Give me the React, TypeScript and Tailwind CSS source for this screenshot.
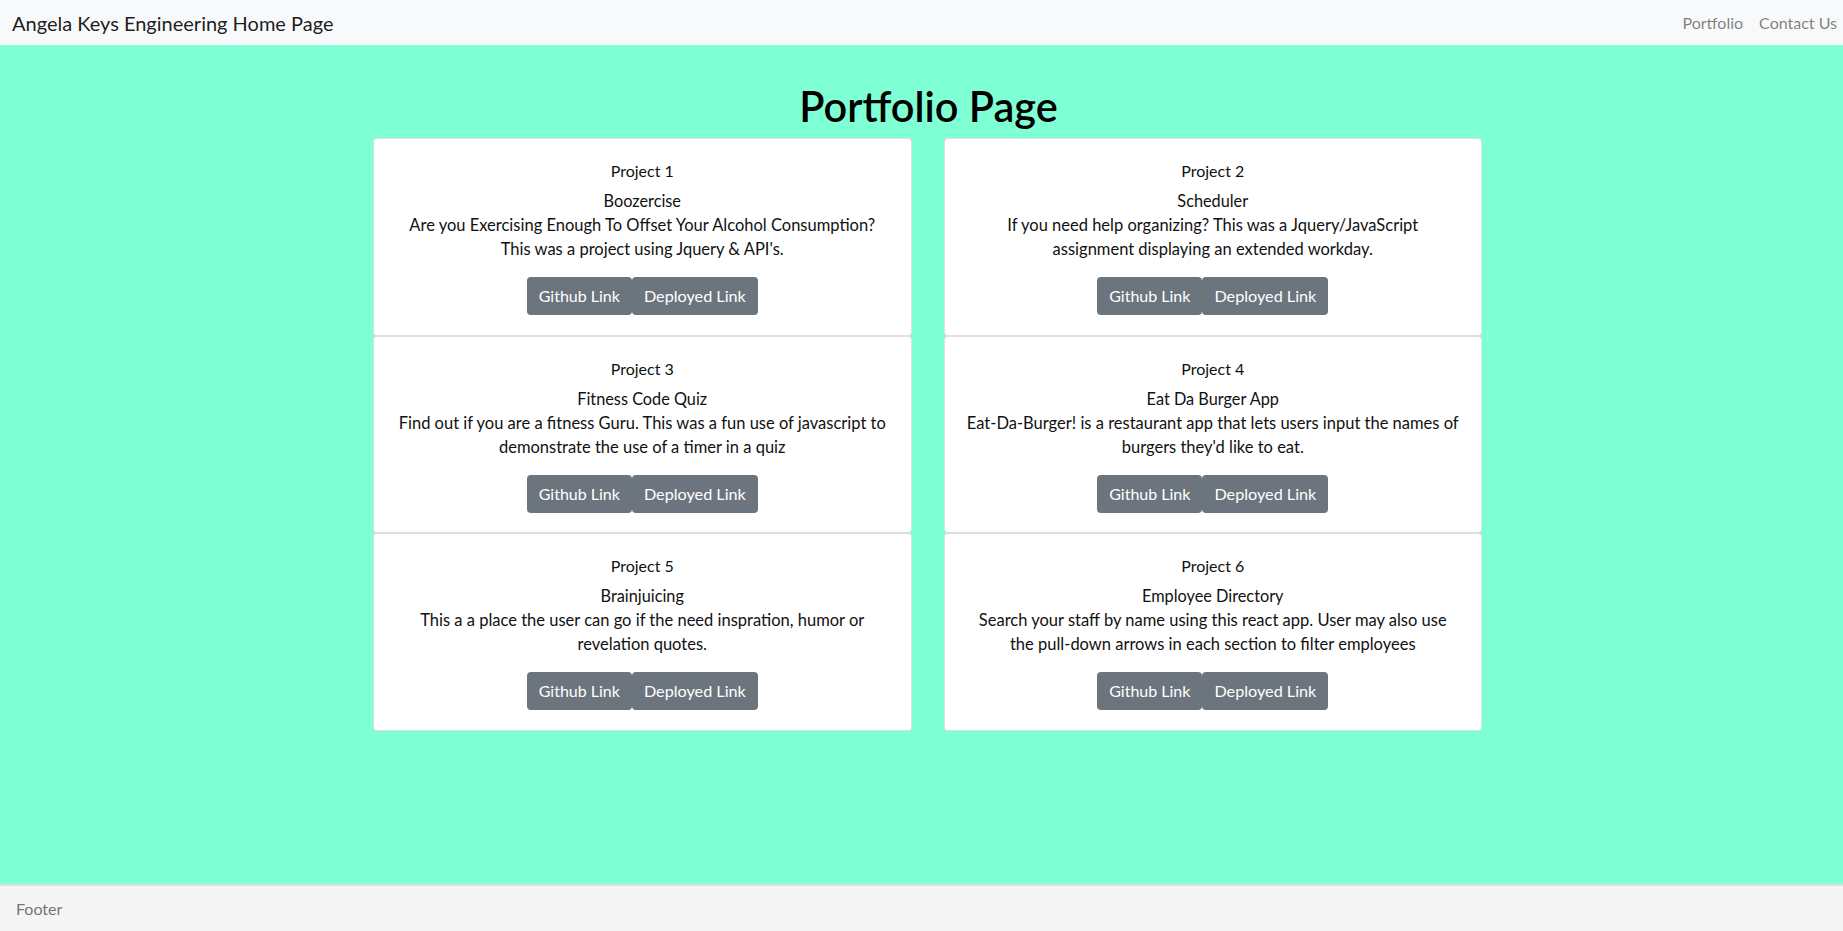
import React from "react";

const projects = [
  { n: "Project 1", t: "Boozercise", d: ["Are you Exercising Enough To Offset Your Alcohol Consumption?", "This was a project using Jquery & API's."] },
  { n: "Project 2", t: "Scheduler", d: ["If you need help organizing? This was a Jquery/JavaScript", "assignment displaying an extended workday."] },
  { n: "Project 3", t: "Fitness Code Quiz", d: ["Find out if you are a fitness Guru. This was a fun use of javascript to", "demonstrate the use of a timer in a quiz"] },
  { n: "Project 4", t: "Eat Da Burger App", d: ["Eat-Da-Burger! is a restaurant app that lets users input the names of", "burgers they'd like to eat."] },
  { n: "Project 5", t: "Brainjuicing", d: ["This a a place the user can go if the need inspration, humor or", "revelation quotes."] },
  { n: "Project 6", t: "Employee Directory", d: ["Search your staff by name using this react app. User may also use", "the pull-down arrows in each section to filter employees"] },
];

function Card({ p }: { p: (typeof projects)[number] }) {
  return (
    <div className="bg-white border border-black/[0.125] rounded-[4px] px-[20px] pt-[20px] pb-[20px] text-center text-[#111] h-[197.5px]">
      <div className="leading-6 text-[16px]">{p.n}</div>
      <div className="leading-6 text-[16.3px] mt-[6px]">{p.t}</div>
      <div className="leading-6 text-[16.5px] whitespace-nowrap">
        {p.d[0]}
        <br />
        {p.d[1]}
      </div>
      <div className="mt-[16px] flex justify-center">
        <button className="bg-[#6c757d] text-white rounded-[4px] px-3 py-[7px] leading-6 text-[16px]">Github Link</button>
        <button className="bg-[#6c757d] text-white rounded-[4px] px-3 py-[7px] leading-6 text-[16.2px]">Deployed Link</button>
      </div>
    </div>
  );
}

export default function App() {
  return (
    <div
      className="h-screen flex flex-col text-[#212529]"
      style={{ fontFamily: '"Segoe UI", Lato, "Liberation Sans", sans-serif' }}
    >
      <nav className="h-[45px] bg-[#f8f9fa] flex items-center justify-between pl-[12px] pr-[6px]">
        <span className="text-[20px] text-black/90">Angela Keys Engineering Home Page</span>
        <div className="flex gap-[16px] text-[16px] text-black/50">
          <span>Portfolio</span>
          <span>Contact Us</span>
        </div>
      </nav>
      <main className="flex-1 bg-[#7fffd4]">
        <h1 className="pt-[37px] pl-[14px] text-center text-[41.5px] leading-[48px] font-semibold text-black mb-[8px]">Portfolio Page</h1>
        <div className="mx-auto w-[1121px] pl-[12px] grid grid-cols-2 gap-x-[32px]">
          <div className="flex flex-col">
            {[0, 2, 4].map((i) => (
              <Card key={i} p={projects[i]} />
            ))}
          </div>
          <div className="flex flex-col">
            {[1, 3, 5].map((i) => (
              <Card key={i} p={projects[i]} />
            ))}
          </div>
        </div>
      </main>
      <footer className="h-[47px] bg-[#f5f5f5] border-t-2 border-[#dedede] flex items-center pl-[16px] text-[16px] text-[#757575]">
        Footer
      </footer>
    </div>
  );
}
